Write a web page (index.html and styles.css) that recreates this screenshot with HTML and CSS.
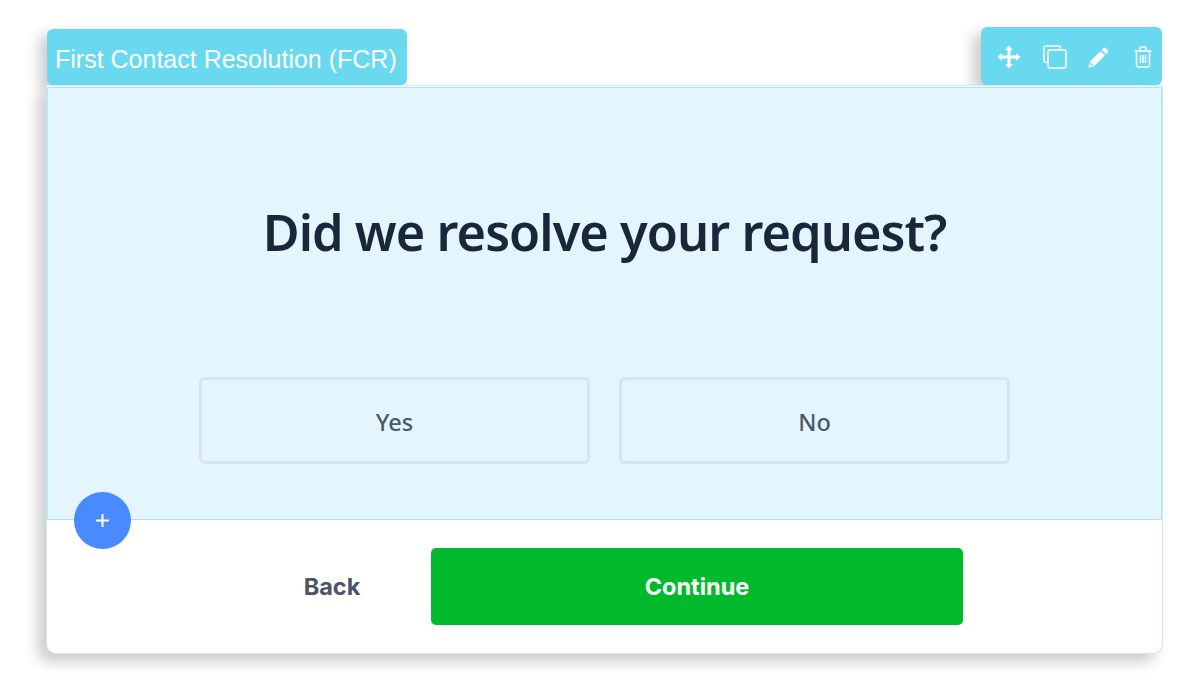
FILE: index.html
```html
<!DOCTYPE html>
<html lang="en">

<head>
    <meta charset="UTF-8">
    <meta name="viewport" content="width=device-width, initial-scale=1.0">
    <title>First Contact Resolution</title>
    <link rel="stylesheet" href="styles.css">
</head>

<body>
    <div class="stage">
        <div class="tabs">
            <div class="block-name">First Contact Resolution (FCR)</div>
            <div class="tools">
                <svg class="icon move" width="24" height="24" viewBox="0 0 24 24">
                    <path fill="#fff" d="M12 .5 16 5h-2.500v5.500H19V8l4.500 4-4.500 4v-2.500h-5.500V19H16l-4 4.500L8 19h2.500v-5.500H5V16L.5 12 5 8v2.500h5.500V5H8z" />
                </svg>
                <svg class="icon" width="24" height="24" viewBox="0 0 24 24" fill="none" stroke="#fff" stroke-width="1.500">
                    <path d="M4.500 17.500H3a2 2 0 0 1-2-2V3a2 2 0 0 1 2-2h12.500a2 2 0 0 1 2 2v1.500" />
                    <rect x="5" y="5" width="18" height="18" rx="2" />
                </svg>
                <svg class="icon pencil" width="23" height="23" viewBox="0 0 24 24">
                    <path fill="#fff" fill-rule="evenodd" d="M17.200 2.200a1.500 1.500 0 0 1 2.100 0l2.500 2.500a1.500 1.500 0 0 1 0 2.100l-1.900 1.900-4.600-4.600zM14 5.400l4.600 4.600L8 20.600l-5.600 1.900a.7.700 0 0 1-.9-.9L3.400 16zM4.300 17.600l-1 3.100 3.100-1z" />
                </svg>
                <svg class="icon" width="24" height="24" viewBox="0 0 24 24" fill="none" stroke="#fff" stroke-width="1.500">
                    <path d="M3.500 6h17M9 5.500V3.500a1.500 1.500 0 0 1 1.500-1.500h3A1.500 1.500 0 0 1 15 3.500v2M5.500 6v14a2 2 0 0 0 2 2h9a2 2 0 0 0 2-2V6M9.500 10v8M12 10v8M14.500 10v8" />
                </svg>
            </div>
        </div>
        <div class="card">
            <div class="question">
                <h1>Did we resolve your request?</h1>
                <div class="answers">
                    <button class="answer">Yes</button>
                    <button class="answer">No</button>
                </div>
            </div>
            <button class="add">
                <svg width="13" height="13" viewBox="0 0 13 13">
                    <path stroke="#fff" stroke-width="2" d="M6.500 0v13M0 6.500h13" />
                </svg>
            </button>
            <div class="footer">
                <button class="back">Back</button>
                <button class="continue">Continue</button>
            </div>
        </div>
    </div>
</body>

</html>
```

FILE: styles.css
```css
body {
    margin: 0;
    padding: 0;
    background-color: #fff;
    font-family: 'Noto Sans', sans-serif;
}

.stage {
    width: 1117px;
    margin-left: 46px;
    padding: 27px 0 37px;
}

.tabs {
    display: flex;
    justify-content: space-between;
    align-items: flex-end;
}

.block-name {
    height: 56px;
    line-height: 61px;
    margin-left: 1px;
    padding: 0 10px 0 8px;
    border-radius: 6px;
    background-color: #69d9f0;
    color: #fff;
    font-family: 'Liberation Sans', sans-serif;
    font-size: 25px;
    box-shadow: -8px 6px 14px rgba(0, 0, 0, 0.2);
}

.tools {
    width: 181px;
    height: 58px;
    margin-right: 1px;
    padding: 2px 7px 0 0;
    box-sizing: border-box;
    display: flex;
    align-items: center;
    justify-content: flex-end;
    gap: 21px;
    border-radius: 6px;
    background-color: #69d9f0;
    box-shadow: -8px 6px 14px rgba(0, 0, 0, 0.2);
}

.move {
    margin-right: 1px;
}

.pencil {
    margin-left: -1px;
}

.card {
    position: relative;
    height: 569px;
    box-sizing: border-box;
    border: 1px solid #cfeaf5;
    border-top-color: #d4eef8;
    border-radius: 0 0 10px 10px;
    background-color: #fff;
    box-shadow: -8px 8px 14px rgba(0, 0, 0, 0.2);
}

.question {
    height: 433px;
    box-sizing: border-box;
    margin-top: 1px;
    padding-top: 104px;
    border: 1px solid #a9e5fb;
    background-color: #e4f6fd;
    text-align: center;
}

h1 {
    margin: 0;
    height: 80px;
    line-height: 80px;
    color: #1a2639;
    font-size: 50.500px;
    font-weight: 600;
    letter-spacing: -0.950px;
}

.answers {
    display: flex;
    justify-content: center;
    gap: 29px;
    margin-top: 105px;
}

.answer {
    width: 391px;
    height: 87px;
    padding-top: 3px;
    border: 3px solid #d8e5ee;
    border-radius: 6px;
    background: none;
    color: #4a5a6e;
    font-family: inherit;
    font-size: 23.500px;
    font-weight: 500;
}

.add {
    position: absolute;
    left: 27px;
    top: 406px;
    width: 57px;
    height: 57px;
    padding: 0;
    display: flex;
    align-items: center;
    justify-content: center;
    border: none;
    border-radius: 50%;
    background-color: #4a8aff;
}

.footer {
    display: flex;
    margin-top: 28px;
    padding-left: 256px;
}

.back {
    width: 58px;
    margin-right: 70px;
    padding: 0;
    border: none;
    background: none;
    color: #4a5568;
    font-family: Inter, sans-serif;
    font-size: 23.500px;
    font-weight: 700;
}

.continue {
    width: 532px;
    height: 77px;
    border: none;
    border-radius: 5px;
    background-color: #00ba2c;
    color: #fff;
    font-family: Inter, sans-serif;
    font-size: 23.500px;
    font-weight: 700;
}
```
